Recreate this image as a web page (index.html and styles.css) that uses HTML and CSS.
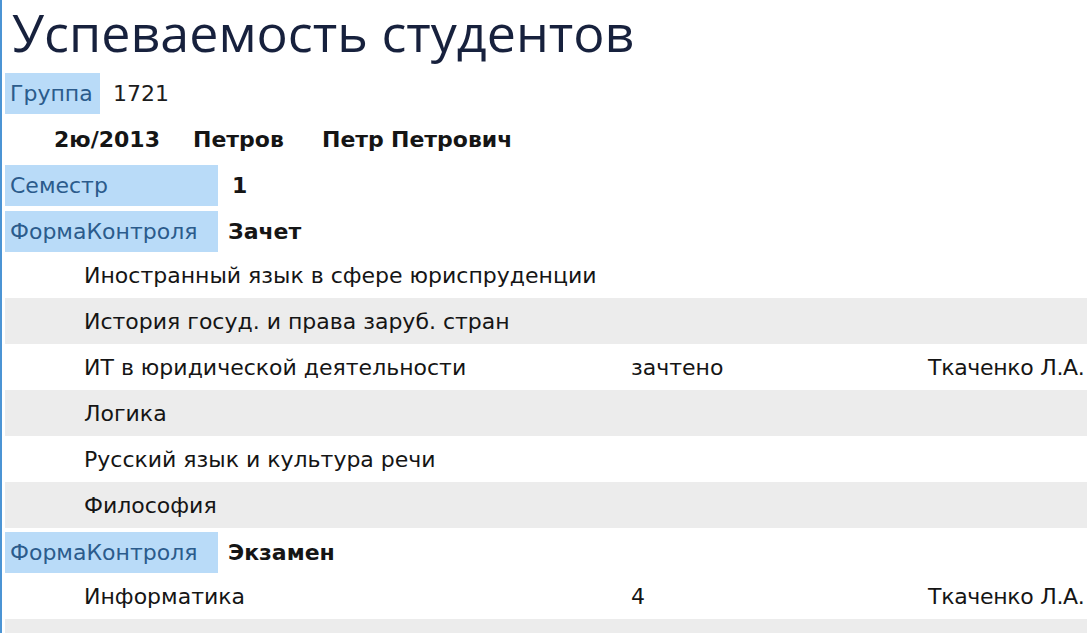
FILE: index.html
```html
<!DOCTYPE html>
<html lang="ru">
<head>
<meta charset="utf-8">
<title>Успеваемость студентов</title>
<link rel="stylesheet" href="styles.css">
</head>
<body>
<div class="report">
  <h1 class="title">Успеваемость студентов</h1>

  <div class="group-row">
    <span class="label label-group">Группа</span>
    <span class="group-value">1721</span>
  </div>

  <div class="student-row">
    <span class="st-id">2ю/2013</span>
    <span class="st-last">Петров</span>
    <span class="st-first">Петр</span>
    <span class="st-middle">Петрович</span>
  </div>

  <div class="field-row">
    <span class="label label-wide">Семестр</span>
    <span class="field-value field-value-num">1</span>
  </div>

  <div class="field-row">
    <span class="label label-wide">ФормаКонтроля</span>
    <span class="field-value">Зачет</span>
  </div>

  <div class="subjects">
    <div class="subject"><span class="name">Иностранный язык в сфере юриспруденции</span><span class="grade"></span><span class="teacher"></span></div>
    <div class="subject alt"><span class="name">История госуд. и права заруб. стран</span><span class="grade"></span><span class="teacher"></span></div>
    <div class="subject"><span class="name">ИТ в юридической деятельности</span><span class="grade">зачтено</span><span class="teacher">Ткаченко Л.А.</span></div>
    <div class="subject alt"><span class="name">Логика</span><span class="grade"></span><span class="teacher"></span></div>
    <div class="subject"><span class="name">Русский язык и культура речи</span><span class="grade"></span><span class="teacher"></span></div>
    <div class="subject alt"><span class="name">Философия</span><span class="grade"></span><span class="teacher"></span></div>
  </div>

  <div class="field-row field-row-gap">
    <span class="label label-wide">ФормаКонтроля</span>
    <span class="field-value">Экзамен</span>
  </div>

  <div class="subjects">
    <div class="subject"><span class="name">Информатика</span><span class="grade">4</span><span class="teacher">Ткаченко Л.А.</span></div>
    <div class="subject alt"><span class="name"></span><span class="grade"></span><span class="teacher"></span></div>
  </div>
</div>
</body>
</html>
```

FILE: styles.css
```css
html, body {
  margin: 0;
  padding: 0;
  background: #ffffff;
  overflow: hidden;
}

.report {
  border-left: 2px solid #4b94d4;
  padding-left: 3px;
  min-height: 633px;
  font-family: "DejaVu Sans", Tahoma, sans-serif;
  font-size: 22px;
  color: #151515;
}

.title {
  margin: 0;
  height: 73px;
  box-sizing: border-box;
  padding: 0 0 0 7px;
  font-family: "Open Sans", "Noto Sans", sans-serif;
  font-weight: 400;
  font-size: 52px;
  line-height: 64px;
  color: #17213d;
  white-space: nowrap;
}

.label {
  display: flex;
  align-items: center;
  height: 41px;
  padding-left: 5px;
  box-sizing: border-box;
  background: #b9dbf8;
  color: #2b5b8c;
}

.label-group {
  width: 95px;
}

.label-wide {
  width: 213px;
}

.group-row {
  display: flex;
  align-items: center;
  gap: 13px;
  height: 41px;
}

.group-value {
  color: #1c1c1c;
}

.student-row {
  display: grid;
  grid-template-columns: 139px 129px 69px auto;
  align-items: center;
  height: 51px;
  padding-left: 49px;
  font-weight: 700;
}

.field-row {
  display: flex;
  align-items: center;
  height: 41px;
  margin-bottom: 5px;
}

.field-row + .subjects {
  margin-top: -5px;
}

.field-row-gap {
  margin-top: 4px;
  margin-bottom: 0;
}

.field-row-gap + .subjects {
  margin-top: 0;
}

.field-value {
  padding-left: 10px;
  font-weight: 700;
}

.field-value-num {
  padding-left: 14px;
}

.subject {
  display: grid;
  grid-template-columns: 547px 297px 1fr;
  align-items: center;
  height: 46px;
  padding-left: 79px;
  white-space: nowrap;
}

.subject.alt {
  background: #ececec;
}

.teacher {
  letter-spacing: -0.3px;
}
```
